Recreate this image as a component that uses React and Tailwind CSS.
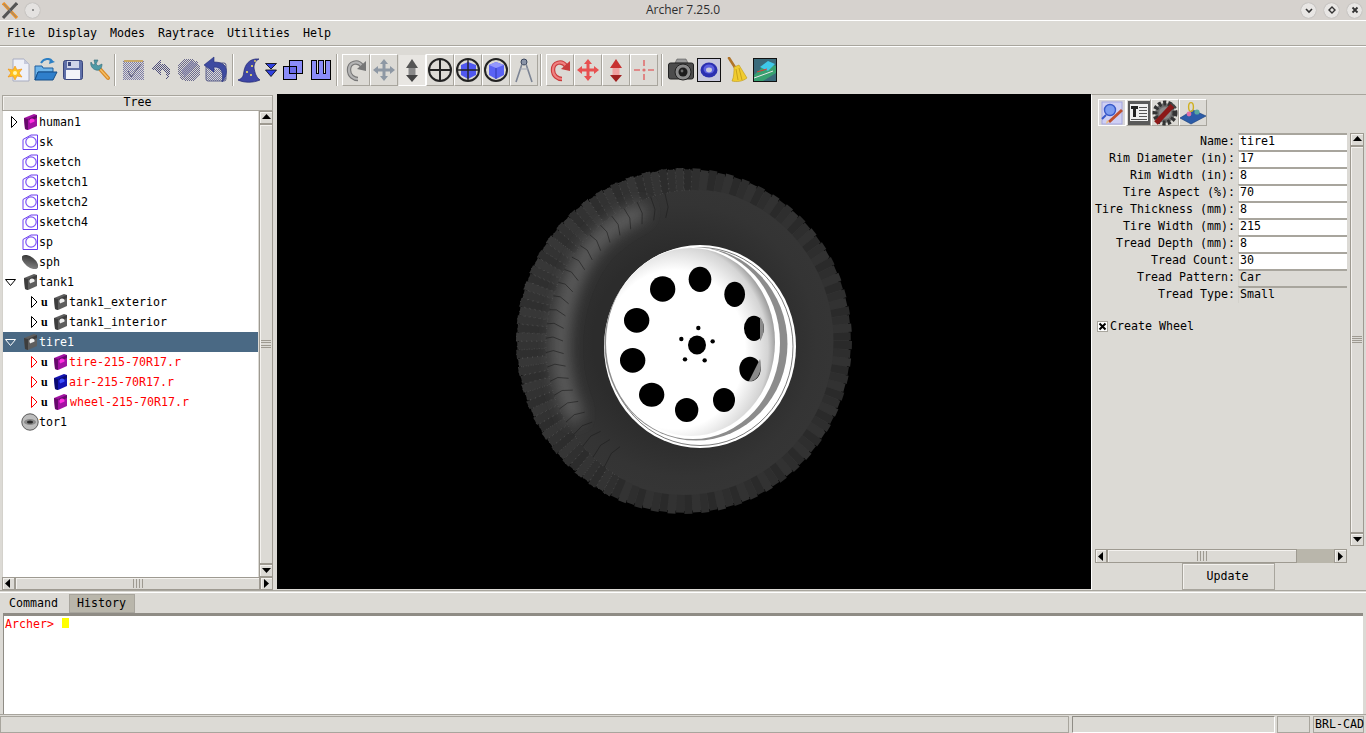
import React from "react";

const MONO = "font-['DejaVu_Sans_Mono',monospace] text-[11.63px] leading-none";

/* ===== TREE ICONS ===== */
const CombIcon = ({ base, light, dark }) => (
  <svg width="15" height="18" viewBox="0 0 15 18">
    <path d="M1 5 L11 1 L14 2 L14 13 L5 17 L2 16 Z" fill={base} />
    <path d="M1 5 L5 6 L5 17 L2 16 Z" fill={dark} />
    <path d="M5 6 L14 2 L14 5 L7 8 Z" fill={dark} />
    <circle cx="9" cy="8" r="2.6" fill={light} />
    <path d="M8 10 L13 8 L13 12 L7 15 Z" fill={base} />
  </svg>
);

const SketchIcon = () => (
  <svg width="17" height="17" viewBox="0 0 17 17">
    <path d="M1 5.5 L9 1 L15.5 1 L15.5 15.5 L1 15.5 Z" fill="#fff" stroke="#6a3cf0" strokeWidth="1" />
    <circle cx="9" cy="8" r="5.2" fill="#fff" stroke="#7d55f5" strokeWidth="1.2" />
  </svg>
);

const SphIcon = () => (
  <svg width="16" height="16" viewBox="0 0 16 16">
    <defs>
      <linearGradient id="sphg" x1="0" y1="0" x2="1" y2="1">
        <stop offset="0" stopColor="#2a2a2a" />
        <stop offset="1" stopColor="#909090" />
      </linearGradient>
    </defs>
    <ellipse cx="8" cy="8" rx="9.6" ry="5" transform="rotate(38 8 8)" fill="url(#sphg)" />
  </svg>
);

const TorIcon = () => (
  <svg width="18" height="18" viewBox="0 0 18 18">
    <circle cx="9" cy="9" r="8.2" fill="#bdbdbd" stroke="#5a5a5a" />
    <ellipse cx="9" cy="9" rx="6" ry="3" fill="#8a8a8a" />
    <ellipse cx="9" cy="9" rx="3" ry="1.6" fill="#2c2c2c" />
  </svg>
);

const ArrowRight = ({ color = "#000" }) => (
  <svg width="7" height="12" viewBox="0 0 7 12">
    <path d="M0.5 0.5 L6 6 L0.5 11.5 Z" fill="none" stroke={color} />
  </svg>
);

const ArrowDown = ({ color = "#000" }) => (
  <svg width="11" height="7" viewBox="0 0 11 7">
    <path d="M0.5 0.5 L10.5 0.5 L5.5 6.5 Z" fill="none" stroke={color} />
  </svg>
);

const GRAY = { base: "#5e5e5e", light: "#eeeeee", dark: "#3d3d3d" };
const MAGENTA = { base: "#a312a3", light: "#ff2ee0", dark: "#660a6a" };
const BLUE = { base: "#1414b4", light: "#3c50ff", dark: "#0a0a70" };

/* ===== TREE ROWS ===== */
const TopRow = ({ open, closed, icon, label, selected }) => (
  <div className={`flex h-[20px] items-center ${selected ? "bg-[#4a6984] text-white" : ""}`}>
    <span className="flex w-[18px] items-center pl-[2px]">
      {open && <ArrowDown color={selected ? "#fff" : "#000"} />}
      {closed && <span className="pl-[6px]"><ArrowRight /></span>}
    </span>
    <span className="flex w-[18px] justify-center">{icon}</span>
    <span className="pt-[2px]">{label}</span>
  </div>
);

const ChildRow = ({ colors, label, red, textClass = "" }) => (
  <div className="flex h-[20px] items-center">
    <span className="ml-[28px] w-[10px]">
      <ArrowRight color={red ? "#ff0000" : "#000"} />
    </span>
    <span className="w-[12px] font-['Liberation_Serif',serif] text-[12px] font-bold text-black">u</span>
    <span className="w-[16px]">
      <CombIcon {...colors} />
    </span>
    <span className={`pt-[2px] ${red ? "text-[#ff0000]" : ""} ${textClass}`}>{label}</span>
  </div>
);

/* ===== SCROLLBARS ===== */
const ScrollBox = ({ children, className = "" }) => (
  <div className={`flex shrink-0 items-center justify-center border border-[#9e9a91] bg-[#dcdad5] shadow-[inset_1px_1px_0_#f4f2ef] ${className}`}>
    {children}
  </div>
);

const Tri = ({ dir }) => {
  const d = {
    up: "M0 6 L4.5 1 L9 6 Z",
    down: "M0 2 L9 2 L4.5 7 Z",
    left: "M6 0 L1 4.5 L6 9 Z",
    right: "M2 0 L7 4.5 L2 9 Z",
  }[dir];
  return (
    <svg width="9" height="9" viewBox="0 0 9 9">
      <path d={d} fill="#000" />
    </svg>
  );
};

const GripV = () => (
  <div className="flex h-[8px] w-full flex-col justify-between px-[1px]">
    <div className="h-px bg-[#9e9a91]" />
    <div className="h-px bg-[#9e9a91]" />
    <div className="h-px bg-[#9e9a91]" />
    <div className="h-px bg-[#9e9a91]" />
  </div>
);

const GripH = () => (
  <div className="flex h-full w-[10px] justify-between py-[1px]">
    <div className="w-px bg-[#9e9a91]" />
    <div className="w-px bg-[#9e9a91]" />
    <div className="w-px bg-[#9e9a91]" />
    <div className="w-px bg-[#9e9a91]" />
  </div>
);

const VScroll = ({ className = "" }) => (
  <div className={`flex w-[14px] shrink-0 flex-col ${className}`}>
    <ScrollBox className="h-[13px] w-full"><Tri dir="up" /></ScrollBox>
    <div className="flex flex-1 items-center border border-[#9e9a91] bg-[#dcdad5] shadow-[inset_1px_1px_0_#f4f2ef]">
      <GripV />
    </div>
    <ScrollBox className="h-[13px] w-full"><Tri dir="down" /></ScrollBox>
  </div>
);

/* ===== TOOLBAR ICONS ===== */
const NewIcon = () => (
  <svg width="24" height="26" viewBox="0 0 24 26">
    <path d="M6 2 L17 2 L22 7 L22 24 L6 24 Z" fill="#eef0f8" stroke="#a8acc0" />
    <path d="M17 2 L17 7 L22 7 Z" fill="#c6cadc" />
    <path d="M8 9 L10 13 L15 12 L12 16 L15 20 L10 19 L8 23 L6 19 L1 20 L4 16 L1 12 L6 13 Z" fill="#ffc21e" stroke="#f08a10" strokeWidth="0.6" />
    <circle cx="8" cy="16" r="2" fill="#fff7b0" />
  </svg>
);

const OpenIcon = () => (
  <svg width="24" height="24" viewBox="0 0 24 24">
    <path d="M7 5 C10 0 16 0 18 3" fill="none" stroke="#2d7fc4" strokeWidth="2" />
    <path d="M21 4 L15 6 L16 1 Z" fill="#2d7fc4" />
    <path d="M1 8 L8 8 L9 10 L19 10 L19 14 L4 14 L1 22 Z" fill="#6fb5ea" stroke="#1f5f9e" />
    <path d="M4 14 L23 14 L19 22 L1 22 Z" fill="#2f7fcb" stroke="#174f88" />
  </svg>
);

const SaveIcon = () => (
  <svg width="20" height="20" viewBox="0 0 20 20">
    <rect x="0.5" y="0.5" width="19" height="19" rx="2" fill="#5f6fa8" stroke="#39457c" />
    <rect x="4" y="1" width="12" height="7" fill="#cfd4e8" />
    <rect x="5" y="2" width="3" height="4" fill="#39457c" />
    <rect x="3" y="10" width="14" height="9" fill="#f2f3f8" />
  </svg>
);

const WrenchIcon = () => (
  <svg width="20" height="22" viewBox="0 0 20 22">
    <path d="M9 9 L18 19" stroke="#d88a28" strokeWidth="4" strokeLinecap="round" />
    <path d="M9 9 L18 19" stroke="#f6c066" strokeWidth="1.4" strokeLinecap="round" />
    <path d="M4 1 L8 1 L6 5 L8 7 L12 5 C12 10 9 12 6 11 C2 10 0 6 1 3 L3 6 L5 5 Z" fill="#4f9aa6" stroke="#2f6a78" strokeWidth="0.6" />
  </svg>
);

const Dither = ({ id, color }) => (
  <pattern id={id} width="2" height="2" patternUnits="userSpaceOnUse">
    <rect width="1" height="1" fill={color} />
    <rect x="1" y="1" width="1" height="1" fill={color} />
  </pattern>
);

const CheckIcon = () => (
  <svg width="21" height="22" viewBox="0 0 21 22" shapeRendering="crispEdges">
    <defs><Dither id="dchk" color="#7c7ca8" /></defs>
    <rect x="0" y="1" width="21" height="20" fill="url(#dchk)" />
    <rect x="1" y="1" width="19" height="2" fill="#c8a868" />
    <path d="M5 12 L8 18 L18 5" fill="none" stroke="#5a5a78" strokeWidth="1" shapeRendering="auto" />
  </svg>
);

const UndoIcon = () => (
  <svg width="22" height="24" viewBox="0 0 22 24" shapeRendering="crispEdges">
    <defs><Dither id="dund" color="#50507c" /></defs>
    <path d="M11 1 L1 10 L11 17 L11 12 C16 12 18 16 16 22 C22 16 22 6 11 6 Z" fill="url(#dund)" />
  </svg>
);

const GlobeIcon = () => (
  <svg width="24" height="24" viewBox="0 0 24 24" shapeRendering="crispEdges">
    <defs><Dither id="dglb" color="#6a6a8c" /></defs>
    <circle cx="12" cy="12" r="11.5" fill="url(#dglb)" />
    <path d="M4 12 L14 3 L20 6 L8 20 Z" fill="#8080a8" opacity="0.6" />
  </svg>
);

const RevertIcon = () => (
  <svg width="26" height="28" viewBox="0 0 26 28">
    <defs><Dither id="drev" color="#7478a0" /></defs>
    <rect x="3" y="7" width="20" height="18" rx="2" fill="url(#drev)" stroke="#5e628c" />
    <rect x="8" y="8" width="10" height="5" fill="#c8cadc" />
    <path d="M11 1 L1 9 L11 16 L11 11 C18 11 21 16 19 26 C26 18 26 6 11 6 Z" fill="#3d4aa0" stroke="#262f78" strokeWidth="0.6" />
  </svg>
);

const WizardIcon = () => (
  <svg width="24" height="26" viewBox="0 0 24 26">
    <path d="M1 23 C6 21 6 20 7 14 C8 8 12 1 22 2 C18 4 17 7 17 11 C18 16 19 20 23 23 C16 26 7 26 1 23 Z" fill="#3e46a6" stroke="#1e2470" strokeWidth="0.7" />
    <circle cx="10" cy="15" r="1.1" fill="#f2e060" />
    <circle cx="15" cy="9" r="1.1" fill="#f2e060" />
    <circle cx="14" cy="18" r="1.1" fill="#f2e060" />
    <circle cx="18" cy="4" r="0.9" fill="#f2e060" />
  </svg>
);

const DownDouble = () => (
  <svg width="12" height="14" viewBox="0 0 12 14">
    <path d="M0.5 0.5 L11.5 0.5 L6 6 Z" fill="#3040e0" stroke="#000" strokeWidth="0.8" />
    <path d="M0.5 7 L11.5 7 L6 13.5 Z" fill="#3040e0" stroke="#000" strokeWidth="0.8" />
  </svg>
);

const OverlapIcon = () => (
  <svg width="20" height="20" viewBox="0 0 20 20" shapeRendering="crispEdges">
    <rect x="6.5" y="0.5" width="13" height="13" fill="#8a8cf8" stroke="#000" />
    <rect x="0.5" y="6.5" width="13" height="13" fill="#8a8cf8" stroke="#000" />
    <rect x="6.5" y="6.5" width="7" height="7" fill="#6a6ce8" stroke="#000" />
  </svg>
);

const SubtractIcon = () => (
  <svg width="20" height="20" viewBox="0 0 20 20" shapeRendering="crispEdges">
    <path d="M0.5 0.5 H5.5 V13.5 H7.5 V0.5 H12.5 V13.5 H14.5 V0.5 H19.5 V19.5 H0.5 Z" fill="#8a8cf8" stroke="#000" />
  </svg>
);

const RotateIcon = ({ stroke, fill }) => (
  <svg width="21" height="23" viewBox="0 0 21 23">
    <path d="M16 7 C12 1 3 3 3 11 C3 17 8 20 12 20" fill="none" stroke={stroke} strokeWidth="4.4" />
    <path d="M16 7 C12 1 3 3 3 11 C3 17 8 20 12 20" fill="none" stroke={fill} strokeWidth="2.2" />
    <path d="M20 2 L20 12 L11 10 Z" fill={stroke} />
  </svg>
);

const MoveIcon = ({ fill }) => (
  <svg width="22" height="22" viewBox="0 0 22 22">
    <path d="M11 0 L15 5 L12.5 5 L12.5 9.5 L17 9.5 L17 7 L22 11 L17 15 L17 12.5 L12.5 12.5 L12.5 17 L15 17 L11 22 L7 17 L9.5 17 L9.5 12.5 L5 12.5 L5 15 L0 11 L5 7 L5 9.5 L9.5 9.5 L9.5 5 L7 5 Z" fill={fill} />
  </svg>
);

const ScaleIcon = ({ top, mid, bottom }) => (
  <svg width="14" height="23" viewBox="0 0 14 23">
    <path d="M7 0 L13 9 L1 9 Z" fill={top} />
    <rect x="3.5" y="9" width="7" height="7" fill={mid} />
    <path d="M1 16 L13 16 L7 23 Z" fill={bottom} />
  </svg>
);

const CrossCircle = ({ cube }) => (
  <svg width="24" height="24" viewBox="0 0 24 24">
    {cube && <path d="M12 4 L20 7 L20 17 L12 21 L5 17 L5 7 Z" fill="#5058f0" />}
    <circle cx="12" cy="12" r="11" fill="none" stroke="#222" strokeWidth="2" />
    <path d="M12 1 V23 M1 12 H23" stroke="#222" strokeWidth={cube ? 1.4 : 2} />
  </svg>
);

const CubeCircle = () => (
  <svg width="24" height="24" viewBox="0 0 24 24">
    <circle cx="12" cy="12" r="11" fill="none" stroke="#222" strokeWidth="2" />
    <path d="M12 4 L20 7 L20 17 L12 21 L5 17 L5 7 Z" fill="#5a62f4" />
    <path d="M5 7 L12 4 L20 7 L12 10 Z" fill="#9498fc" />
    <path d="M12 10 V21" stroke="#3038b0" strokeWidth="1" />
  </svg>
);

const CompassIcon = () => (
  <svg width="20" height="26" viewBox="0 0 20 26">
    <circle cx="10" cy="5" r="3" fill="#8a94a8" stroke="#39455c" />
    <path d="M8 7 L2 25 M12 7 L18 25" stroke="#7c8494" strokeWidth="1.6" fill="none" />
    <path d="M6 12 H14" stroke="#a0a6b4" />
  </svg>
);

const CameraIcon = () => (
  <svg width="26" height="24" viewBox="0 0 26 24">
    <path d="M9 1 L18 1 L20 5 L7 5 Z" fill="#9a9a9a" stroke="#444" strokeWidth="0.5" />
    <rect x="0.5" y="5" width="25" height="16" rx="2" fill="#4c4c4c" stroke="#222" />
    <circle cx="15" cy="14" r="8" fill="#8a8a8a" stroke="#222" />
    <circle cx="15" cy="14" r="4.5" fill="#1c1c1c" />
    <circle cx="14" cy="13" r="1.4" fill="#6c6c6c" />
  </svg>
);

const TorusIcon = () => (
  <svg width="24" height="24" viewBox="0 0 24 24">
    <rect x="0.5" y="0.5" width="23" height="23" fill="#c8c8dc" stroke="#111" />
    <ellipse cx="12" cy="12" rx="8.5" ry="7.5" fill="#2c30b0" />
    <ellipse cx="12" cy="11" rx="5.5" ry="4.5" fill="#5c60e0" />
    <ellipse cx="12" cy="12" rx="3" ry="2.4" fill="#c8c8dc" />
  </svg>
);

const BroomIcon = () => (
  <svg width="22" height="26" viewBox="0 0 22 26">
    <path d="M3 1 L10 12" stroke="#b07428" strokeWidth="2.6" strokeLinecap="round" />
    <path d="M8 10 L13 8 L21 21 C16 25 10 25 6 24 C8 20 8 14 8 10 Z" fill="#f0cc30" stroke="#c09818" strokeWidth="0.6" />
    <path d="M10 12 L12 23 M13 11 L16 23" stroke="#b89010" strokeWidth="0.7" />
  </svg>
);

const RaytraceIcon = () => (
  <svg width="24" height="24" viewBox="0 0 24 24">
    <rect x="0.5" y="0.5" width="23" height="23" fill="#3a6a7a" stroke="#111" />
    <path d="M1 17 L14 5 L23 8 L23 15 L10 23 L1 23 Z" fill="#38a070" />
    <path d="M7 9 L15 3 L22 6 L15 13 Z" fill="#3fc8e8" />
    <path d="M4 14 L14 11" stroke="#e03838" />
    <path d="M1 20 L12 16 L20 13" stroke="#e8e8e8" />
  </svg>
);

/* ===== TOOLBAR PIECES ===== */
const Sep = ({ className = "" }) => (
  <div className={`flex h-[32px] w-[2px] shrink-0 ${className}`}>
    <div className="w-px bg-[#a8a59d]" />
    <div className="w-px bg-white" />
  </div>
);

const Slot = ({ className = "w-[27px]", children }) => (
  <div className={`flex h-[32px] shrink-0 items-center justify-center ${className}`}>{children}</div>
);

const ToolBtn = ({ active, children }) => (
  <div
    className={`flex h-[32px] w-[28px] shrink-0 items-center justify-center border ${
      active
        ? "border-t-[#dcdad5] border-l-[#dcdad5] border-r-white border-b-white bg-[#e8e6e2]"
        : "border-t-white border-l-white border-r-[#a8a59d] border-b-[#a8a59d]"
    }`}
  >
    {children}
  </div>
);

/* ===== RIGHT PANEL ICONS ===== */
const EditIcon = () => (
  <svg width="24" height="24" viewBox="0 0 24 24">
    <rect x="2" y="1" width="20" height="22" fill="#cfd0f4" stroke="#a4a6e0" />
    <circle cx="10" cy="9" r="5.5" fill="#7c9cf0" stroke="#3858c8" strokeWidth="1.4" />
    <path d="M6 14 L2 18" stroke="#3858c8" strokeWidth="2" />
    <path d="M22 9 L9 21" stroke="#c05030" strokeWidth="3" />
    <path d="M9 21 L6 23 L7 19 Z" fill="#f0c080" />
  </svg>
);

const TextIcon = () => (
  <svg width="22" height="24" viewBox="0 0 22 24" shapeRendering="crispEdges">
    <rect x="0" y="0" width="22" height="24" fill="#5a5a5a" />
    <rect x="2" y="3" width="18" height="17" fill="#f0f0f0" />
    <path d="M3 5 H10 V8 H8 V16 H5 V8 H3 Z" fill="#222" />
    <path d="M11 6 H19 M11 9 H19 M11 12 H19 M11 15 H19 M3 18 H19" stroke="#555" />
  </svg>
);

const GearIcon = () => (
  <svg width="26" height="26" viewBox="0 0 26 26">
    <circle cx="13" cy="13" r="10" fill="#6c6c6c" stroke="#333" strokeDasharray="3 2" strokeWidth="5" />
    <circle cx="13" cy="13" r="6" fill="#8a8a8a" />
    <path d="M4 23 L21 5" stroke="#8c1818" strokeWidth="5" />
    <path d="M19 3 L24 8" stroke="#444" strokeWidth="2" />
  </svg>
);

const SceneIcon = () => (
  <svg width="26" height="24" viewBox="0 0 26 24">
    <path d="M0 17 L13 9 L26 15 L11 23 Z" fill="#2c5ca8" stroke="#123a78" strokeWidth="0.6" />
    <ellipse cx="11" cy="6" rx="2.4" ry="4.4" fill="none" stroke="#d0b020" strokeWidth="1.4" />
    <circle cx="17" cy="11" r="2.6" fill="#58a8a0" />
    <circle cx="9" cy="13" r="2.4" fill="#e070a8" />
  </svg>
);

/* ===== TIRE RENDER ===== */
const CX = 684;
const CY = 341;

const pt = (ang, r) => `${(CX + Math.cos(ang) * 168 * r).toFixed(1)},${(CY + Math.sin(ang) * 173 * r).toFixed(1)}`;

const treadBlocks = Array.from({ length: 124 }, (_, i) => {
  const a = (i / 124) * Math.PI * 2;
  const a2 = ((i + 0.95) / 124) * Math.PI * 2;
  const left = Math.max(0, -Math.cos(a - 0.25));
  const inner = 0.89 - left * 0.07;
  const outer = i % 2 ? 0.993 : 1;
  const shade = Math.round(42 + (i % 3) * 4 + left * 5);
  return {
    points: [pt(a, inner), pt(a2, inner), pt(a2, outer), pt(a, outer)].join(" "),
    fill: `rgb(${shade},${shade},${shade})`,
    slit: [pt(a, 0.72), pt(a + 0.03, 0.78), pt(a + 0.02, inner)],
    left,
    i,
  };
});

const HOLES = [
  [600, 358, 34, 38], [488, 387, 38, 38], [704, 403, 31, 38], [410, 481, 38, 37], [762, 505, 30, 38],
  [398, 601, 38, 37], [750, 627, 32, 37], [455, 704, 38, 36], [672, 720, 33, 36], [560, 750, 35, 36],
];
const BOLTS = [[595, 504], [544, 537], [638, 544], [555, 598], [614, 601]];

const Tire = () => (
  <svg width="337" height="347" viewBox="516 168 337 347">
    <defs>
      <radialGradient id="tireBase" cx="0.5" cy="0.5" r="0.5">
        <stop offset="0.55" stopColor="#2c2c2c" />
        <stop offset="0.8" stopColor="#343434" />
        <stop offset="1" stopColor="#363636" />
      </radialGradient>
      <radialGradient id="disc" cx="0.4" cy="0.54" r="0.62">
        <stop offset="0.68" stopColor="#ffffff" />
        <stop offset="0.9" stopColor="#d4d4d4" />
        <stop offset="1" stopColor="#8c8c8c" />
      </radialGradient>
      <filter id="blur12" x="-40%" y="-40%" width="180%" height="180%">
        <feGaussianBlur stdDeviation="8" />
      </filter>
    </defs>
    <ellipse cx={CX} cy={CY} rx="165" ry="170" fill="url(#tireBase)" />
    {treadBlocks.map((b) => (
      <polygon key={b.i} points={b.points} fill={b.fill} />
    ))}
    <path d="M575 415 C552 365 556 300 590 250 C605 232 622 220 640 212" fill="none" stroke="#6a6a6a" strokeWidth="13" strokeLinecap="round" filter="url(#blur12)" />
    {treadBlocks.map((b) =>
      b.left > 0.3 && b.i % 2 === 0 ? (
        <polyline key={b.i} points={b.slit.join(" ")} fill="none" stroke="#1c1c1c" strokeWidth="0.6" />
      ) : null
    )}
    {treadBlocks.map((b) =>
      b.left > 0.2 ? (
        <polygon key={b.i} points={b.points} fill="none" stroke="#5c5c5c" strokeWidth="0.5" strokeDasharray="1 4" />
      ) : null
    )}
    <ellipse cx="700" cy="346.5" rx="96" ry="101.5" fill="#ffffff" />
    <ellipse cx="700" cy="346.5" rx="93" ry="99" fill="none" stroke="#444" strokeWidth="0.7" />
    <ellipse cx="696" cy="344" rx="91.5" ry="96.5" fill="#8c8c8c" />
    <ellipse cx="693" cy="343" rx="87" ry="96" fill="#ffffff" />
    <ellipse cx="691" cy="342" rx="84" ry="94" fill="url(#disc)" />
    {HOLES.map(([x, y, rx, ry]) => (
      <ellipse key={x} cx={500 + x / 3} cy={160 + y / 3} rx={rx / 3} ry={ry / 3} fill="#000" />
    ))}
    <path d="M760 317 C765 322 765 334 760 341 Z" fill="#8a8a8a" />
    <path d="M749 381 L760 359 C762 365 761 378 752 381 Z" fill="#8a8a8a" />
    <ellipse cx="697" cy="345" rx="9" ry="9.5" fill="#000" />
    {BOLTS.map(([x, y]) => (
      <circle key={x} cx={500 + x / 3} cy={160 + y / 3} r="2.2" fill="#000" />
    ))}
  </svg>
);

/* ===== FORM ===== */
const FIELDS = [
  ["Name:", "tire1"],
  ["Rim Diameter (in):", "17"],
  ["Rim Width (in):", "8"],
  ["Tire Aspect (%):", "70"],
  ["Tire Thickness (mm):", "8"],
  ["Tire Width (mm):", "215"],
  ["Tread Depth (mm):", "8"],
  ["Tread Count:", "30"],
  ["Tread Pattern:", "Car", true],
  ["Tread Type:", "Small", true],
];

const FieldRow = ({ label, value, readonly }) => (
  <div className="flex h-[17px] items-center">
    <span className="w-[141px] shrink-0 text-right whitespace-nowrap">{label}</span>
    <span
      className={`ml-[3px] flex h-[17px] flex-1 items-center border-t-2 border-l border-t-[#a8a59d] border-l-[#d4d2cc] pb-[2px] pl-[1px] ${
        readonly ? "bg-[#dcdad5]" : "bg-white"
      }`}
    >
      {value}
    </span>
  </div>
);

const StatusCell = ({ className, children }) => (
  <div className={`flex h-[17px] shrink-0 items-center whitespace-nowrap border border-[#a8a59d] bg-[#dcdad5] pl-[1px] ${className}`}>{children}</div>
);

export default function App() {
  return (
    <div className={`flex h-[733px] w-[1366px] flex-col overflow-hidden bg-[#dcdad5] text-black ${MONO}`}>
      {/* ===== TITLE BAR ===== */}
      <div className="flex h-[20px] shrink-0 items-center bg-[#d6d2ce]">
        <div className="flex w-[66px] items-center pl-[2px]">
          <svg width="16" height="17" viewBox="0 0 16 17">
            <path d="M1 1 L15 16" stroke="#e89028" strokeWidth="3.2" />
            <path d="M15 1 L1 16" stroke="#555" strokeWidth="3" />
            <path d="M2 2 L14 15" stroke="#8a8a8a" strokeWidth="1" />
          </svg>
          <span className="ml-[7px] flex h-[15px] w-[15px] items-center justify-center rounded-full bg-[#e4e2e0] shadow-[0_0_1px_#888]">
            <span className="h-[2px] w-[2px] rounded-full bg-[#777]" />
          </span>
        </div>
        <span className="flex-1 text-center font-['Open_Sans',sans-serif] text-[12px] text-[#2e2e2e]">Archer 7.25.0</span>
        <div className="flex w-[66px] justify-end gap-[8px] pr-[4px]">
          {[
            <path key="a" d="M4 6 L7 9 L10 6" fill="none" stroke="#333" strokeWidth="1.6" />,
            <path key="b" d="M7 4 L10 7 L7 10 L4 7 Z" fill="none" stroke="#333" strokeWidth="1.4" />,
            <path key="c" d="M4.5 4.5 L9.5 9.5 M9.5 4.5 L4.5 9.5" fill="none" stroke="#333" strokeWidth="1.8" />,
          ].map((p) => (
            <span key={p.key} className="flex h-[15px] w-[15px] items-center justify-center rounded-full bg-[#e8e6e4] shadow-[0_0_1px_#888]">
              <svg width="14" height="14" viewBox="0 0 14 14">{p}</svg>
            </span>
          ))}
        </div>
      </div>

      {/* ===== MENU ===== */}
      <div className="flex h-[26px] shrink-0 items-center gap-[13px] border-t border-b border-t-white border-b-[#a8a59d] pl-[7px] pt-[1px]">
        {["File", "Display", "Modes", "Raytrace", "Utilities", "Help"].map((m) => (
          <span key={m}>{m}</span>
        ))}
      </div>

      {/* ===== TOOLBAR ===== */}
      <div className="flex h-[48px] shrink-0 items-center border-t border-t-white pl-[5px] pb-[1px]">
        <Slot><NewIcon /></Slot>
        <Slot><OpenIcon /></Slot>
        <Slot><SaveIcon /></Slot>
        <Slot><WrenchIcon /></Slot>
        <Sep className="ml-[1px]" />
        <Slot className="ml-[4px] w-[27px]"><CheckIcon /></Slot>
        <Slot className="w-[28px]"><UndoIcon /></Slot>
        <Slot><GlobeIcon /></Slot>
        <Slot className="w-[28px]"><RevertIcon /></Slot>
        <Sep className="ml-[2px]" />
        <Slot className="ml-[1px] w-[27px]"><WizardIcon /></Slot>
        <Slot className="w-[17px]"><DownDouble /></Slot>
        <Slot className="w-[28px]"><OverlapIcon /></Slot>
        <Slot><SubtractIcon /></Slot>
        <Sep className="ml-[2px] mr-[4px]" />
        <ToolBtn><RotateIcon stroke="#777" fill="#b4b4b4" /></ToolBtn>
        <ToolBtn><MoveIcon fill="#8e98a4" /></ToolBtn>
        <ToolBtn active><ScaleIcon top="#555" mid="#8a8a8a" bottom="#444" /></ToolBtn>
        <ToolBtn><CrossCircle /></ToolBtn>
        <ToolBtn><CrossCircle cube /></ToolBtn>
        <ToolBtn><CubeCircle /></ToolBtn>
        <ToolBtn><CompassIcon /></ToolBtn>
        <Sep className="ml-[2px] mr-[4px]" />
        <ToolBtn><RotateIcon stroke="#c83c3c" fill="#f08080" /></ToolBtn>
        <ToolBtn><MoveIcon fill="#e85050" /></ToolBtn>
        <ToolBtn><ScaleIcon top="#c83030" mid="#f0a0a0" bottom="#a02020" /></ToolBtn>
        <ToolBtn>
          <svg width="22" height="22" viewBox="0 0 22 22">
            <path d="M11 1 V7 M11 15 V21 M1 11 H7 M15 11 H21" stroke="#e07070" strokeWidth="1.6" />
            <circle cx="11" cy="11" r="1.6" fill="#e07070" />
          </svg>
        </ToolBtn>
        <Sep className="ml-[3px] mr-[4px]" />
        <Slot className="w-[27px]"><CameraIcon /></Slot>
        <Slot className="w-[29px]"><TorusIcon /></Slot>
        <Slot className="w-[28px]"><BroomIcon /></Slot>
        <Slot className="w-[27px]"><RaytraceIcon /></Slot>
      </div>

      {/* ===== MAIN ===== */}
      <div className="flex h-[496px] shrink-0">
        {/* tree panel */}
        <div className="flex w-[277px] shrink-0 flex-col pl-[2px] pr-[4px] pt-[1px]">
          <div className="flex h-[16px] shrink-0 items-center justify-center border border-[#a8a59d] shadow-[inset_1px_1px_0_#f4f2ef]">Tree</div>
          <div className="flex min-h-0 flex-1">
            <div className="flex-1 border-l border-[#d4d2cc] bg-white pt-[1px]">
              <TopRow closed icon={<CombIcon {...MAGENTA} />} label="human1" />
              <TopRow icon={<SketchIcon />} label="sk" />
              <TopRow icon={<SketchIcon />} label="sketch" />
              <TopRow icon={<SketchIcon />} label="sketch1" />
              <TopRow icon={<SketchIcon />} label="sketch2" />
              <TopRow icon={<SketchIcon />} label="sketch4" />
              <TopRow icon={<SketchIcon />} label="sp" />
              <TopRow icon={<SphIcon />} label="sph" />
              <TopRow open icon={<CombIcon {...GRAY} />} label="tank1" />
              <ChildRow colors={GRAY} label="tank1_exterior" />
              <ChildRow colors={GRAY} label="tank1_interior" />
              <TopRow open selected icon={<CombIcon {...GRAY} />} label="tire1" />
              <ChildRow red colors={MAGENTA} label="tire-215-70R17.r" />
              <ChildRow red colors={BLUE} label="air-215-70R17.r" />
              <ChildRow red colors={MAGENTA} label="wheel-215-70R17.r" textClass="ml-px" />
              <TopRow icon={<TorIcon />} label="tor1" />
            </div>
            <VScroll className="ml-px" />
          </div>
          <div className="flex h-[13px] shrink-0">
            <ScrollBox className="w-[13px]"><Tri dir="left" /></ScrollBox>
            <div className="flex flex-1 justify-center border border-[#9e9a91] shadow-[inset_1px_1px_0_#f4f2ef]"><GripH /></div>
            <ScrollBox className="w-[13px]"><Tri dir="right" /></ScrollBox>
          </div>
        </div>

        {/* canvas */}
        <div className="flex h-[495px] w-[814px] shrink-0 items-center justify-center bg-black">
          <Tire />
        </div>

        {/* attribute panel */}
        <div className="flex flex-1 flex-col border-l border-l-white border-t border-t-[#a8a59d]">
          <div className="flex h-[38px] shrink-0 items-start pl-[6px] pt-[4px]">
            <div className="flex h-[27px] w-[28px] items-center justify-center border border-white bg-[#d8d6d8]"><EditIcon /></div>
            <div className="flex h-[27px] w-[25px] items-center justify-center border border-r-[#a8a59d] border-b-[#a8a59d] border-t-white border-l-white"><TextIcon /></div>
            <div className="flex h-[27px] w-[28px] items-center justify-center border border-r-[#a8a59d] border-b-[#a8a59d] border-t-white border-l-white"><GearIcon /></div>
            <div className="flex h-[27px] w-[28px] items-center justify-center border border-r-[#a8a59d] border-b-[#a8a59d] border-t-white border-l-white"><SceneIcon /></div>
          </div>
          <div className="flex min-h-0 flex-1 pr-[2px]">
            <div className="flex flex-1 flex-col pl-[2px] pr-[3px]">
              {FIELDS.map(([label, value, readonly]) => (
                <FieldRow key={label} label={label} value={value} readonly={readonly} />
              ))}
              <div className="mt-[15px] flex h-[17px] items-center gap-[2px] pl-[3px]">
                <span className="flex h-[11px] w-[11px] items-center justify-center border border-[#a8a59d] bg-white">
                  <svg width="9" height="9" viewBox="0 0 9 9">
                    <path d="M1.5 1.5 L7.5 7.5 M7.5 1.5 L1.5 7.5" stroke="#000" strokeWidth="2" />
                  </svg>
                </span>
                <span>Create Wheel</span>
              </div>
            </div>
            <VScroll />
          </div>
          <div className="ml-[3px] mt-[3px] flex h-[14px] w-[252px] shrink-0">
            <ScrollBox className="w-[12px]"><Tri dir="left" /></ScrollBox>
            <div className="flex w-[190px] justify-center border border-[#9e9a91] shadow-[inset_1px_1px_0_#f4f2ef]"><GripH /></div>
            <div className="flex-1 bg-[#b9b6ab]" />
            <ScrollBox className="w-[13px]"><Tri dir="right" /></ScrollBox>
          </div>
          <div className="flex h-[27px] shrink-0">
            <div className="ml-[90px] flex w-[93px] items-center justify-center border border-[#a8a59d] pr-[2px] shadow-[inset_1px_1px_0_#f4f2ef]">Update</div>
          </div>
        </div>
      </div>

      {/* ===== COMMAND ===== */}
      <div className="flex min-h-0 flex-1 flex-col border-t border-t-[#a8a59d] pt-[1px]">
        <div className="h-[2px] shrink-0 border-t border-t-white" />
        <div className="flex h-[19px] shrink-0 pl-[3px]">
          <div className="flex w-[66px] items-center pl-[6px] pt-px">Command</div>
          <div className="flex w-[66px] items-center border border-[#a8a59d] bg-[#b9b6ab] pl-[7px]">History</div>
        </div>
        <div className="mx-[3px] flex h-[101px] shrink-0 items-start gap-[8px] border-t-[3px] border-l border-t-[#8f8c85] border-l-[#8f8c85] bg-white pl-px pt-[2px] text-[#ff0000]">
          <span className="mt-px">Archer&gt;</span>
          <span className="h-[10px] w-[7px] bg-[#ffff00]" />
        </div>
        <div className="h-[2px] shrink-0 border-t border-t-[#a8a59d]" />
        <div className="flex shrink-0">
          <StatusCell className="w-[1069px]" />
          <StatusCell className="ml-[3px] w-[203px] border-b-white border-r-white border-t-[#8f8c85] border-l-[#8f8c85]" />
          <StatusCell className="ml-[2px] w-[33px]" />
          <StatusCell className="ml-[3px] w-[51px]">BRL-CAD</StatusCell>
        </div>
      </div>
    </div>
  );
}
